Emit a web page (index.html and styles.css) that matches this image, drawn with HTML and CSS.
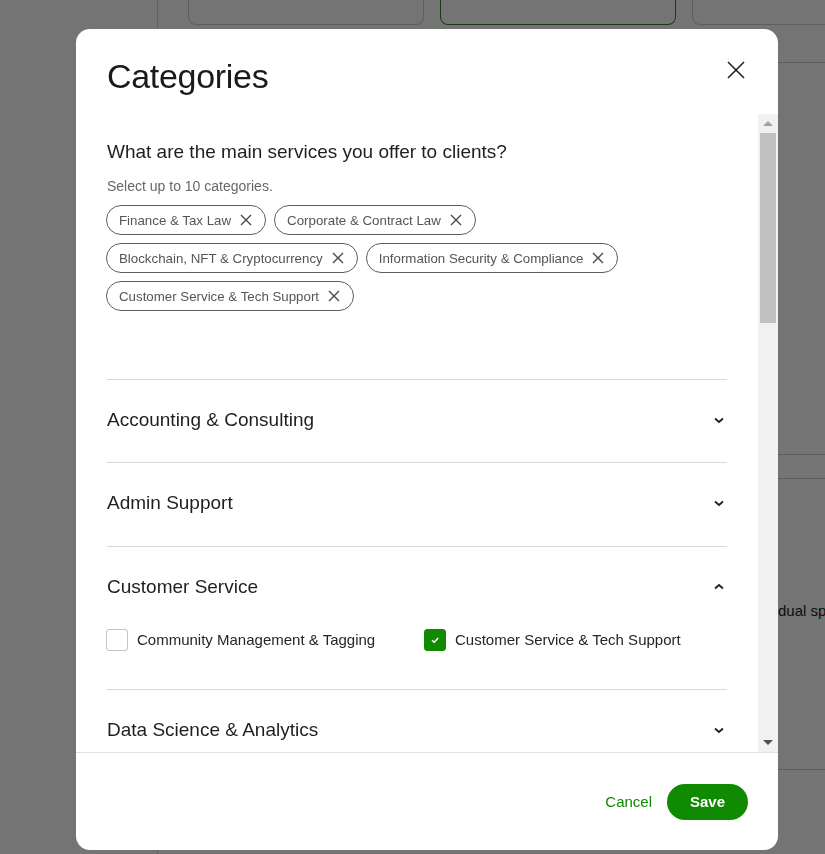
FILE: index.html
```html
<!DOCTYPE html>
<html lang="en">
<head>
<meta charset="utf-8">
<title>Categories</title>
<link rel="stylesheet" href="styles.css">
</head>
<body>
<div class="page">
  <aside class="sidebar"></aside>
  <main class="main">
    <div class="cards">
      <div class="card"></div>
      <div class="card card-active"></div>
      <div class="card"></div>
    </div>
    <div class="section s1"></div>
    <div class="section s2"></div>
    <div class="section s3"><p class="bg-text">dual sp</p></div>
  </main>
</div>

<div class="overlay"></div>

<div class="modal" role="dialog" aria-labelledby="modal-title">
  <header class="modal-header">
    <h1 id="modal-title" class="modal-title">Categories</h1>
    <button class="close-btn" aria-label="Close">
      <svg width="20" height="20" viewBox="0 0 20 20"><path d="M2 2L18 18M18 2L2 18" stroke="#1f1f1f" stroke-width="1.6" fill="none"/></svg>
    </button>
  </header>

  <div class="modal-body">
    <div class="scroll-content">
      <h2 class="question">What are the main services you offer to clients?</h2>
      <p class="hint">Select up to 10 categories.</p>
      <div class="chips">
        <span class="chip">Finance &amp; Tax Law <svg class="chip-x" viewBox="0 0 14 14"><path d="M2 2L12 12M12 2L2 12"/></svg></span>
        <span class="chip">Corporate &amp; Contract Law <svg class="chip-x" viewBox="0 0 14 14"><path d="M2 2L12 12M12 2L2 12"/></svg></span>
        <span class="chip">Blockchain, NFT &amp; Cryptocurrency <svg class="chip-x" viewBox="0 0 14 14"><path d="M2 2L12 12M12 2L2 12"/></svg></span>
        <span class="chip">Information Security &amp; Compliance <svg class="chip-x" viewBox="0 0 14 14"><path d="M2 2L12 12M12 2L2 12"/></svg></span>
        <span class="chip">Customer Service &amp; Tech Support <svg class="chip-x" viewBox="0 0 14 14"><path d="M2 2L12 12M12 2L2 12"/></svg></span>
      </div>

      <div class="accordion">
        <div class="acc-item">
          <div class="acc-head"><span class="acc-title">Accounting &amp; Consulting</span>
            <svg class="chev" viewBox="0 0 16 16"><path d="M4 6.5L8 10L12 6.5"/></svg></div>
        </div>
        <div class="acc-item tall">
          <div class="acc-head"><span class="acc-title">Admin Support</span>
            <svg class="chev" viewBox="0 0 16 16"><path d="M4 6.5L8 10L12 6.5"/></svg></div>
        </div>
        <div class="acc-item open">
          <div class="acc-head"><span class="acc-title">Customer Service</span>
            <svg class="chev" viewBox="0 0 16 16"><path d="M4 9.5L8 6L12 9.5"/></svg></div>
          <div class="acc-body">
            <label class="check"><span class="box"></span>Community Management &amp; Tagging</label>
            <label class="check"><span class="box checked"><svg viewBox="0 0 12 12"><path d="M3 6.2L5.2 8.3L9.2 4"/></svg></span>Customer Service &amp; Tech Support</label>
          </div>
        </div>
        <div class="acc-item">
          <div class="acc-head"><span class="acc-title">Data Science &amp; Analytics</span>
            <svg class="chev" viewBox="0 0 16 16"><path d="M4 6.5L8 10L12 6.5"/></svg></div>
        </div>
      </div>
    </div>
    <div class="scrollbar">
      <span class="sb-arrow up"></span>
      <div class="sb-track"><div class="sb-thumb"></div></div>
      <span class="sb-arrow down"></span>
    </div>
  </div>

  <footer class="modal-footer">
    <button class="btn-cancel">Cancel</button>
    <button class="btn-save">Save</button>
  </footer>
</div>
</body>
</html>
```

FILE: styles.css
```css
* { box-sizing: border-box; }
html, body { margin: 0; padding: 0; height: 100%; }
body {
  font-family: "Liberation Sans", Arial, sans-serif;
  color: #222;
  background: #fff;
  overflow: hidden;
}

/* background page */
.page { display: flex; height: 854px; }
.sidebar { width: 158px; border-right: 1px solid #d0d0d0; flex: none; }
.main { flex: 1; display: flex; flex-direction: column; padding-left: 30px; min-width: 0; }
.cards { display: flex; gap: 16px; height: 25px; }
.card {
  width: 236px; flex: none; height: 25px;
  border: 1px solid #cfcfcf; border-top: none;
  border-radius: 0 0 8px 8px;
}
.card-active { border-color: #2f8a1e; }
.section { border-bottom: 1px solid #cfcfcf; }
.s1 { height: 38px; }
.s2 { margin-top: 0; height: 392px; }
.s3 { margin-top: 23px; height: 292px; border-top: 1px solid #cfcfcf; padding-left: 590px; padding-top: 122px; }
.bg-text { margin: 0; font-size: 15px; line-height: 20px; color: #222; white-space: nowrap; }

.overlay {
  position: fixed; inset: 0;
  background: rgba(0, 0, 0, 0.545);
}

/* modal */
.modal {
  position: fixed;
  left: 76px; top: 29px;
  width: 702px; height: 821px;
  background: #fff;
  border-radius: 14px;
  display: flex; flex-direction: column;
  overflow: hidden;
}
.modal-header {
  display: flex; justify-content: space-between; align-items: flex-start;
  padding: 27px 30px 0 31px;
  height: 85px; flex: none;
}
.modal-title {
  margin: 0; font-size: 34px; line-height: 40px; font-weight: 400;
  color: #1a1a1a; letter-spacing: -0.3px;
}
.close-btn {
  border: 0; background: none; padding: 0; margin: 2px 0 0 0;
  width: 24px; height: 24px; display: flex; align-items: center; justify-content: center;
}

.modal-body { flex: 1; display: flex; min-height: 0; }
.scroll-content { flex: 1; padding: 25px 31px 0 31px; overflow: hidden; }
.question { margin: 0; font-size: 19px; line-height: 26px; font-weight: 400; color: #1f1f1f; }
.hint { margin: 11px 0 0; font-size: 14px; line-height: 20px; color: #676767; }
.chips { display: flex; flex-wrap: wrap; gap: 8px 8px; margin-top: 9px; width: 540px; margin-left: -1px; }
.chip {
  display: inline-flex; align-items: center; gap: 8px;
  height: 30px; padding: 0 12px 0 12px;
  border: 1px solid #5e5e5e; border-radius: 15px;
  font-size: 13.3px; color: #555;
  white-space: nowrap;
}
.chip-x { width: 14px; height: 14px; }
.chip-x path { stroke: #4a4a4a; stroke-width: 1.4; fill: none; }

.accordion { margin-top: 68px; }
.acc-item { border-top: 1px solid #d9d9d9; }
.acc-head {
  display: flex; justify-content: space-between; align-items: center;
  padding: 27px 0 29px;
}
.acc-item.tall .acc-head { padding-bottom: 30px; }
.acc-title { font-size: 19px; line-height: 26px; color: #1f1f1f; }
.chev { width: 16px; height: 16px; }
.chev path { stroke: #1f1f1f; stroke-width: 1.8; fill: none; }
.acc-body {
  display: grid; grid-template-columns: 1fr 1fr; column-gap: 16px;
  padding: 0 0 38px;
}
.check {
  display: flex; align-items: center; gap: 9px;
  font-size: 15px; line-height: 22px; color: #262626;
  margin-left: -1px;
}
.box {
  width: 22px; height: 22px; flex: none;
  border: 1px solid #c4c4c4; border-radius: 3px; background: #fff;
  display: flex; align-items: center; justify-content: center;
}
.box.checked { background: #108a00; border-color: #108a00; }
.box svg { width: 12px; height: 12px; }
.box svg path { stroke: #fff; stroke-width: 1.5; fill: none; }

/* fake classic scrollbar */
.scrollbar {
  width: 20px; flex: none; background: #f1f1f1;
  display: flex; flex-direction: column; align-items: center;
}
.sb-arrow { width: 0; height: 0; border-left: 5px solid transparent; border-right: 5px solid transparent; flex: none; }
.sb-arrow.up { border-bottom: 5px solid #a3a3a3; margin: 7px 0 7px; }
.sb-arrow.down { border-top: 5px solid #505050; margin: 7px 0 7px; }
.sb-track { flex: 1; width: 100%; padding: 0 2px; }
.sb-thumb { height: 190px; background: #c1c1c1; }

.modal-footer {
  flex: none; height: 98px;
  border-top: 1px solid #e0e0e0;
  display: flex; justify-content: flex-end; align-items: center;
  padding: 0 30px 0 0; gap: 15px;
}
.btn-cancel {
  border: 0; background: none; padding: 0;
  font-family: inherit; font-size: 15px; color: #108a00;
}
.btn-save {
  border: 0; background: #108a00; color: #fff;
  width: 81px; height: 36px; border-radius: 18px;
  font-family: inherit; font-size: 15px; font-weight: 700;
}
```
